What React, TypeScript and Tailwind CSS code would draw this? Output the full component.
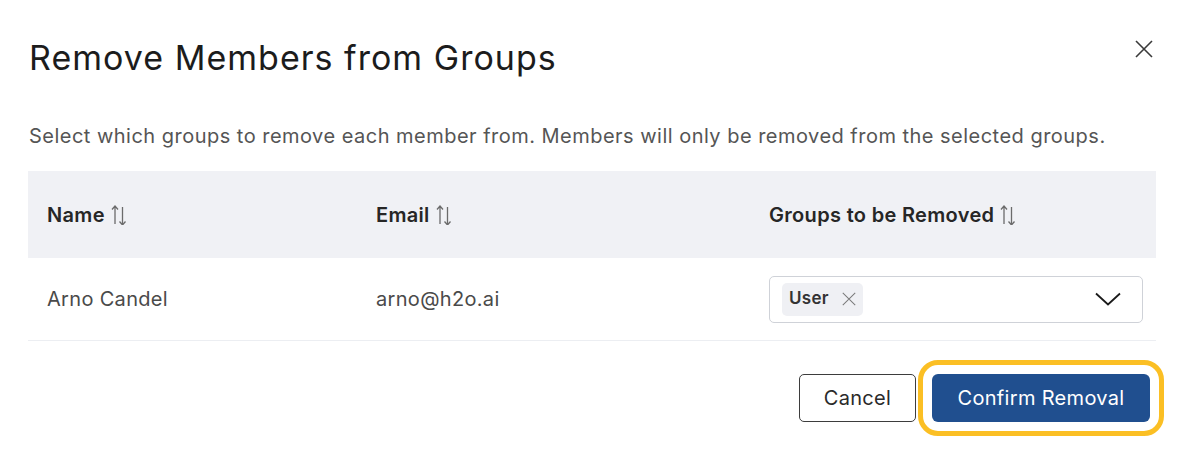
function SortIcon() {
  return (
    <svg width="16" height="20" viewBox="0 0 16 20" fill="none" stroke="#6b6b6b" strokeWidth="1.3" className="ml-1.5 inline-block">
      <path d="M4 19V1M1 4.5L4 1l3 3.5" />
      <path d="M11.5 2v18M8.5 16.5l3 3.5 3-3.5" />
    </svg>
  );
}

function XIcon({ size, color, width }: { size: number; color: string; width: number }) {
  return (
    <svg width={size} height={size} viewBox="0 0 18 18" fill="none" stroke={color} strokeWidth={width}>
      <path d="M1 1l16 16M17 1L1 17" />
    </svg>
  );
}

export default function App() {
  return (
    <div
      className="h-[457px] w-[1191px] bg-white text-[#1f1f1f] tracking-[0.02em]"
      style={{ fontFamily: "Inter, 'Liberation Sans', sans-serif" }}
    >
      <div className="flex items-start justify-between pl-[29px] pr-[38px] pt-[34px]">
        <h1 className="text-[34px] leading-[48px] font-normal tracking-[0.03em] text-[#1c1c1c]">
          Remove Members from Groups
        </h1>
        <button type="button" className="mt-[6px]" aria-label="Close">
          <XIcon size={18} color="#3a3a3a" width={1.6} />
        </button>
      </div>

      <p className="mt-[41px] pl-[29px] text-[20px] leading-[26px] tracking-[0.024em] text-[#555555]">
        Select which groups to remove each member from. Members will only be removed from the selected groups.
      </p>

      <div className="mx-[28px] mt-[22px] w-[1128px]">
        <div className="grid h-[87px] grid-cols-[329px_393px_1fr] items-center bg-[#f0f1f5] pl-[19px] text-[20px] font-semibold text-[#262626]">
          <div className="flex items-center">
            Name <SortIcon />
          </div>
          <div className="flex items-center">
            Email <SortIcon />
          </div>
          <div className="flex items-center">
            Groups to be Removed <SortIcon />
          </div>
        </div>
        <div className="grid h-[83px] grid-cols-[329px_393px_1fr] items-center border-b border-[#eceef2] pl-[19px] text-[20px] text-[#4a4a4a]">
          <div>Arno Candel</div>
          <div>arno@h2o.ai</div>
          <div className="pr-[13px]">
            <div className="flex h-[47px] items-center justify-between rounded-[5px] border border-[#cfd2d8] pl-[12px] pr-[21px]">
              <span className="flex h-[33px] items-center gap-[13px] rounded-[5px] bg-[#eff0f4] pl-[7px] pr-[7px] text-[17px] font-semibold text-[#333333]">
                User
                <XIcon size={14} color="#7a7a7a" width={1.3} />
              </span>
              <svg width="26" height="14" viewBox="0 0 26 14" fill="none" stroke="#1a1a1a" strokeWidth="1.8">
                <path d="M1 1.5l12 11 12-11" />
              </svg>
            </div>
          </div>
        </div>
      </div>

      <div className="mt-[33px] flex justify-end gap-[16px] pr-[41px]">
        <button
          type="button"
          className="h-[48px] w-[117px] rounded-[5px] border border-[#3d3d3d] bg-white text-[20px] text-[#2a2a2a]"
        >
          Cancel
        </button>
        <button
          type="button"
          className="h-[48px] w-[218px] rounded-[6px] bg-[#204f8f] text-[20px] text-white outline-[5px] outline-offset-[9px] outline-[#fbbf24] outline-solid"
        >
          Confirm Removal
        </button>
      </div>
    </div>
  );
}
